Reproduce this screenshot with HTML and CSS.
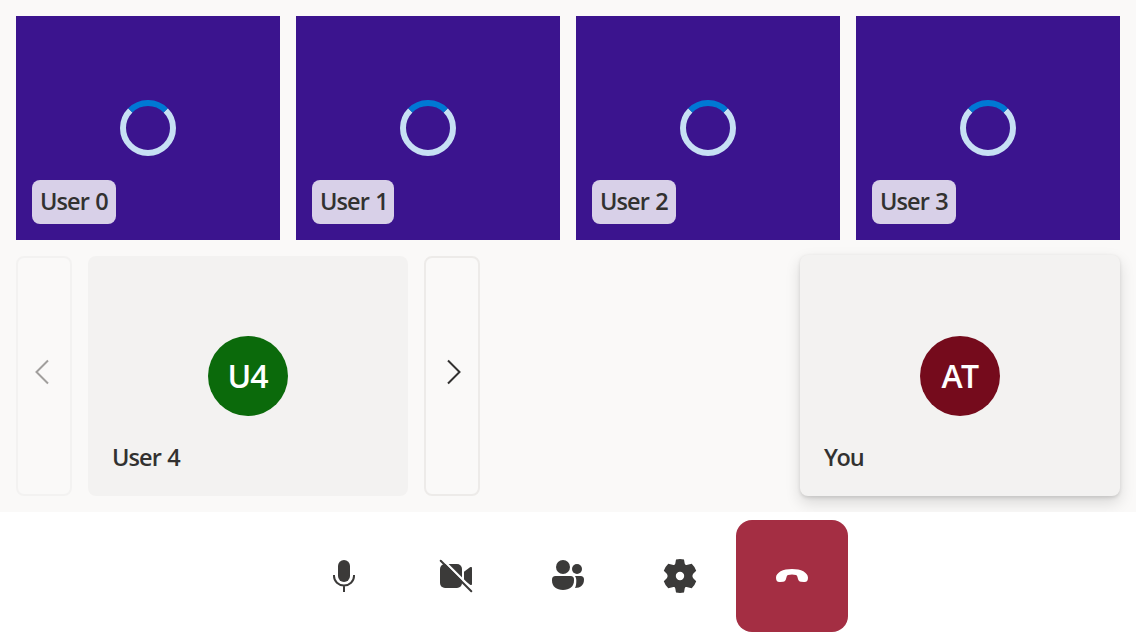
FILE: index.html
```html
<!DOCTYPE html>
<html lang="en">
<head>
<meta charset="utf-8">
<title>Call</title>
<link rel="stylesheet" href="styles.css">
</head>
<body>
<main class="stage">
  <section class="grid">
    <article class="video"><svg class="spinner" viewBox="0 0 56 56"><path class="track" d="M45.68 10.32A25 25 0 1 1 10.32 10.32"/><path class="arc" d="M10.32 10.32A25 25 0 0 1 45.68 10.32"/></svg><span class="label">User 0</span></article>
    <article class="video"><svg class="spinner" viewBox="0 0 56 56"><path class="track" d="M45.68 10.32A25 25 0 1 1 10.32 10.32"/><path class="arc" d="M10.32 10.32A25 25 0 0 1 45.68 10.32"/></svg><span class="label narrow">User 1</span></article>
    <article class="video"><svg class="spinner" viewBox="0 0 56 56"><path class="track" d="M45.68 10.32A25 25 0 1 1 10.32 10.32"/><path class="arc" d="M10.32 10.32A25 25 0 0 1 45.68 10.32"/></svg><span class="label">User 2</span></article>
    <article class="video"><svg class="spinner" viewBox="0 0 56 56"><path class="track" d="M45.68 10.32A25 25 0 1 1 10.32 10.32"/><path class="arc" d="M10.32 10.32A25 25 0 0 1 45.68 10.32"/></svg><span class="label">User 3</span></article>
  </section>
  <section class="strip">
    <button class="page disabled" aria-label="Previous"><svg class="chevron" viewBox="0 0 16 26"><path d="M14 1.5 2.500 13 14 24.500"/></svg></button>
    <article class="tile"><span class="avatar green">U4</span><span class="name">User 4</span></article>
    <button class="page next" aria-label="Next"><svg class="chevron" viewBox="0 0 16 26"><path d="M2 1.5 13.500 13 2 24.500"/></svg></button>
    <article class="tile local"><span class="avatar maroon">AT</span><span class="name you">You</span></article>
  </section>
</main>
<footer class="bar">
  <button class="control" aria-label="Mute"><svg class="icon" viewBox="0 0 40 40"><rect x="14" y="4" width="12" height="22" rx="6"/><path class="line" d="M10 19v1a10 9.500 0 0 0 20 0v-1M20 29.500v6.500"/></svg></button>
  <button class="control" aria-label="Turn on camera"><svg class="icon" viewBox="0 0 40 40"><rect x="4" y="8" width="22" height="24" rx="5"/><path d="M28 15.800 34 11.300c1.200-.8 2-.4 2 1v15.400c0 1.400-.8 1.800-2 1L28 24.200z"/><path class="gap" d="m6 3 32 32"/><path class="slash" d="m4.700 4.700 30.600 30.600"/></svg></button>
  <button class="control" aria-label="People"><svg class="icon" viewBox="0 0 40 40"><circle cx="15" cy="11" r="7"/><circle cx="29" cy="13" r="5"/><path d="M7.500 20h15a3.500 3.500 0 0 1 3.500 3.500v1c0 6-4.500 9.500-11 9.500S4 30.500 4 24.500v-1A3.500 3.500 0 0 1 7.500 20z"/><path d="M26.800 20h5.700a3.500 3.500 0 0 1 3.500 3.500c0 5.500-3.300 8.500-9 8.500 1-2 1.300-4 1.300-7.500 0-2-.4-3.500-1.500-4.500z"/></svg></button>
  <button class="control" aria-label="Settings"><svg class="icon" viewBox="0 0 40 40"><path fill-rule="evenodd" d="M16 3.500Q20 2.600 24 3.500L24.700 7.600Q25 9.300 26.600 8.900L31.700 7.700Q34.900 10.700 36.200 14.700L33 18Q31.700 20 33 22L36.200 25.300Q34.900 29.300 31.700 32.300L26.600 31.100Q25 30.700 24.700 32.400L24 36.500Q20 37.400 16 36.500L15.300 32.400Q15 30.700 13.400 31.100L8.300 32.300Q5.100 29.300 3.800 25.300L7 22Q8.300 20 7 18L3.800 14.700Q5.100 10.700 8.300 7.700L13.400 8.900Q15 9.300 15.300 7.600ZM20 15.800a4.200 4.200 0 1 0 0 8.400 4.200 4.200 0 0 0 0-8.400z"/></svg></button>
  <button class="control leave" aria-label="Leave"><svg class="icon" viewBox="0 0 40 40"><path d="M20 13c9 0 16 3.400 16 8.800 0 3.100-1.300 4.500-4.200 4.200l-2.900-.3c-1.800-.2-2.500-1.100-2.900-2.700l-.7-2.500c-.3-.9-.6-1.300-1.400-1.500a18 18 0 0 0-7.800 0c-.8.2-1.100.6-1.400 1.500l-.7 2.500c-.4 1.600-1.100 2.500-2.900 2.700l-2.900.3C5.300 26.300 4 24.900 4 21.800 4 16.400 11 13 20 13z"/></svg></button>
</footer>
</body>
</html>
```
FILE: styles.css
```css
* { box-sizing: border-box; }
body {
  margin: 0;
  width: 1136px;
  height: 640px;
  overflow: hidden;
  display: flex;
  flex-direction: column;
  background: #faf9f8;
  color: #323130;
  font-family: "Open Sans", "Noto Sans", sans-serif;
  font-size: 23.5px;
  font-weight: 600;
}
button {
  padding: 0;
  border: 0;
  background: transparent;
  display: flex;
  align-items: center;
  justify-content: center;
}
.stage {
  height: 512px;
  padding: 16px;
  display: flex;
  flex-direction: column;
  gap: 16px;
}
.grid {
  display: grid;
  grid-template-columns: repeat(4, 1fr);
  gap: 16px;
}
.video {
  position: relative;
  height: 224px;
  background: #3b148e;
  display: flex;
  align-items: center;
  justify-content: center;
}
.spinner { width: 56px; height: 56px; fill: none; stroke-width: 6; }
.track { stroke: #c7e0f4; }
.arc { stroke: #0078d4; }
.label {
  position: absolute;
  left: 16px;
  bottom: 16px;
  width: 84px;
  height: 44px;
  padding-left: 8px;
  border-radius: 8px;
  background: #d8d0e8;
  line-height: 43px;
  letter-spacing: -0.9px;
  word-spacing: 1px;
  white-space: nowrap;
}
.narrow { width: 82px; }
.strip { display: flex; gap: 16px; height: 240px; }
.page {
  width: 56px;
  border: 2px solid #edebe9;
  border-radius: 8px;
  padding: 0 4px 8px 0;
  color: #323130;
}
.page.next { padding: 0 0 8px 4px; }
.disabled { border-color: #f3f2f1; color: #a19f9d; }
.chevron { width: 16px; height: 26px; fill: none; stroke: currentColor; stroke-width: 2; }
.tile {
  position: relative;
  width: 320px;
  border-radius: 8px;
  background: #f3f2f1;
  display: flex;
  align-items: center;
  justify-content: center;
}
.local {
  margin: -1px 0 0 auto;
  padding-top: 1px;
  box-shadow: 0 6.4px 14.4px rgba(0, 0, 0, .132), 0 1.2px 3.6px rgba(0, 0, 0, .108);
}
.avatar {
  width: 80px;
  height: 80px;
  border-radius: 50%;
  color: #fff;
  font-size: 32px;
  line-height: 80px;
  letter-spacing: -1px;
  padding-right: 1px;
  text-align: center;
}
.green { background: #0b6a0b; }
.maroon { background: #750b1c; letter-spacing: -1.6px; }
.name {
  position: absolute;
  left: 24px;
  bottom: 17px;
  line-height: 44px;
  letter-spacing: -0.9px;
  word-spacing: 1px;
}
.name.you { letter-spacing: -1.3px; }
.bar {
  position: relative;
  height: 128px;
  padding: 8px 0;
  background: #fff;
  display: flex;
  justify-content: center;
}
.control { width: 112px; height: 112px; color: #3b3a39; }
.icon { width: 40px; height: 40px; fill: currentColor; }
.line { fill: none; stroke: currentColor; stroke-width: 2; }
.gap { stroke: #fff; stroke-width: 2.4; }
.slash { stroke: currentColor; stroke-width: 2; stroke-linecap: round; }
.leave { background: #a42e43; color: #fff; border-radius: 16px; }
```
